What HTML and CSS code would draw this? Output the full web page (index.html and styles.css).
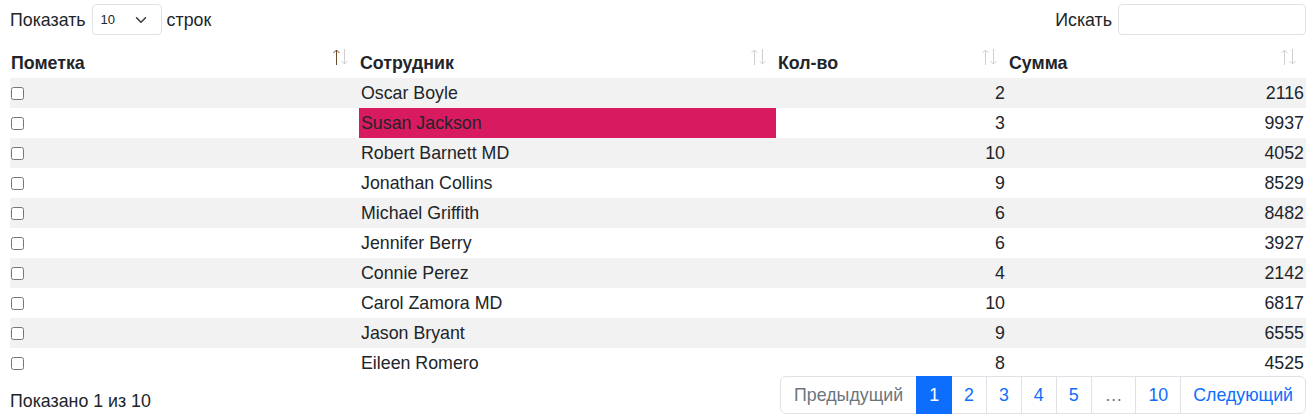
FILE: index.html
```html
<!DOCTYPE html>
<html lang="ru">
<head>
<meta charset="utf-8">
<title>Таблица</title>
<link rel="stylesheet" href="styles.css">
</head>
<body>
<div class="wrap">
  <div class="controls">
    <label class="length">Показать
      <span class="select"><span class="select-val">10</span>
        <svg class="chev" width="16" height="12" viewBox="0 0 16 16"><path d="m2 5 6 6 6-6" fill="none" stroke="#343a40" stroke-width="2" stroke-linecap="round" stroke-linejoin="round"/></svg>
      </span>
      строк</label>
    <label class="search">Искать <span class="input"></span></label>
  </div>

  <table class="tbl">
    <colgroup>
      <col class="c1"><col class="c2"><col class="c3"><col class="c4">
    </colgroup>
    <thead>
      <tr>
        <th>Пометка<span class="sort"><svg width="18" height="18" viewBox="0 0 18 18"><g fill="none" stroke-width="1"><path class="on" d="M4.5 2v15M1.5 5l3-3 3 3"/><path class="off" d="M12.5 1v15M9.5 13l3 3 3-3"/></g></svg></span></th>
        <th>Сотрудник<span class="sort"><svg width="18" height="18" viewBox="0 0 18 18"><g fill="none" stroke-width="1"><path class="off" d="M4.5 2v15M1.5 5l3-3 3 3"/><path class="off" d="M12.5 1v15M9.5 13l3 3 3-3"/></g></svg></span></th>
        <th>Кол-во<span class="sort"><svg width="18" height="18" viewBox="0 0 18 18"><g fill="none" stroke-width="1"><path class="off" d="M4.5 2v15M1.5 5l3-3 3 3"/><path class="off" d="M12.5 1v15M9.5 13l3 3 3-3"/></g></svg></span></th>
        <th>Сумма<span class="sort"><svg width="18" height="18" viewBox="0 0 18 18"><g fill="none" stroke-width="1"><path class="off" d="M4.5 2v15M1.5 5l3-3 3 3"/><path class="off" d="M12.5 1v15M9.5 13l3 3 3-3"/></g></svg></span></th>
      </tr>
    </thead>
    <tbody>
      <tr><td><input type="checkbox"></td><td>Oscar Boyle</td><td class="num">2</td><td class="num">2116</td></tr>
      <tr><td><input type="checkbox"></td><td class="hl">Susan Jackson</td><td class="num">3</td><td class="num">9937</td></tr>
      <tr><td><input type="checkbox"></td><td>Robert Barnett MD</td><td class="num">10</td><td class="num">4052</td></tr>
      <tr><td><input type="checkbox"></td><td>Jonathan Collins</td><td class="num">9</td><td class="num">8529</td></tr>
      <tr><td><input type="checkbox"></td><td>Michael Griffith</td><td class="num">6</td><td class="num">8482</td></tr>
      <tr><td><input type="checkbox"></td><td>Jennifer Berry</td><td class="num">6</td><td class="num">3927</td></tr>
      <tr><td><input type="checkbox"></td><td>Connie Perez</td><td class="num">4</td><td class="num">2142</td></tr>
      <tr><td><input type="checkbox"></td><td>Carol Zamora MD</td><td class="num">10</td><td class="num">6817</td></tr>
      <tr><td><input type="checkbox"></td><td>Jason Bryant</td><td class="num">9</td><td class="num">6555</td></tr>
      <tr><td><input type="checkbox"></td><td>Eileen Romero</td><td class="num">8</td><td class="num">4525</td></tr>
    </tbody>
  </table>

  <div class="footer">
    <div class="info">Показано 1 из 10</div>
    <ul class="pagination">
      <li class="page disabled">Предыдущий</li>
      <li class="page active">1</li>
      <li class="page">2</li>
      <li class="page">3</li>
      <li class="page">4</li>
      <li class="page">5</li>
      <li class="page disabled ell">…</li>
      <li class="page">10</li>
      <li class="page">Следующий</li>
    </ul>
  </div>
</div>
</body>
</html>
```

FILE: styles.css
```css
* { box-sizing: border-box; }
html, body { margin: 0; padding: 0; background: #fff; }
body {
  font-family: "Liberation Sans", Arial, sans-serif;
  font-size: 17.8px;
  line-height: 24px;
  color: #212529;
}
.wrap { padding: 4px 8px 0 10px; }

.controls {
  display: flex;
  justify-content: space-between;
  align-items: center;
  height: 31px;
}
.length, .search { display: flex; align-items: center; }
.select {
  display: inline-flex;
  align-items: center;
  justify-content: space-between;
  width: 70px;
  height: 31px;
  margin: 0 5px 0 6px;
  padding: 0 12px 0 8px;
  border: 1px solid #dee2e6;
  border-radius: 4px;
  font-size: 13px;
}
.chev { display: block; width: 16px; height: 12px; }
.input {
  display: inline-block;
  width: 188px;
  height: 31px;
  margin-left: 6px;
  border: 1px solid #dee2e6;
  border-radius: 4px;
}

.tbl {
  width: 1296px;
  margin-top: 13px;
  border-collapse: collapse;
  table-layout: fixed;
}
.c1 { width: 348px; }
.c2 { width: 418px; }
.c3 { width: 231px; }
.c4 { width: 299px; }
.tbl th {
  position: relative;
  text-align: left;
  font-weight: 700;
  vertical-align: bottom;
  height: 30px;
  padding: 3px 26px 3px 2px;
}
.tbl th:first-child { padding-left: 1px; }
.sort {
  position: absolute;
  right: 8px;
  top: 0;
  width: 18px;
  height: 18px;
}
.sort svg { display: block; }
.on { stroke: #6a4a2a; }
.off { stroke: #cfcfcf; }

.tbl td {
  height: 30px;
  padding: 3px 2px;
  vertical-align: middle;
}
.tbl td:nth-child(2) { padding-left: 3px; }
.tbl tbody tr:nth-child(odd) td { background: #f2f2f2; }
.tbl td.num { text-align: right; }
.tbl tbody tr td.hl { background: #d81b60; box-shadow: inset 1px 0 0 #fff; }
.tbl input[type="checkbox"] {
  width: 13px;
  height: 13px;
  margin: 0 0 0 -1px;
  vertical-align: middle;
  position: relative;
  top: -1px;
}

.footer {
  display: flex;
  justify-content: space-between;
  align-items: flex-start;
  margin-top: -2px;
}
.info { padding-top: 13px; }
.pagination {
  display: flex;
  list-style: none;
  margin: 0;
  padding: 0;
}
.page {
  padding: 6px 12px;
  border: 1px solid #dee2e6;
  margin-left: -1px;
  color: #0d6efd;
  background: #fff;
  line-height: 24px;
}
.page:first-child { border-radius: 6px 0 0 6px; margin-left: 0; padding: 6px 13px; }
.page:last-child { border-radius: 0 6px 6px 0; }
.page.disabled { color: #6c757d; }
.page.ell { padding: 6px 13px; }
.page.active { background: #0d6efd; border-color: #0d6efd; color: #fff; position: relative; }
```
